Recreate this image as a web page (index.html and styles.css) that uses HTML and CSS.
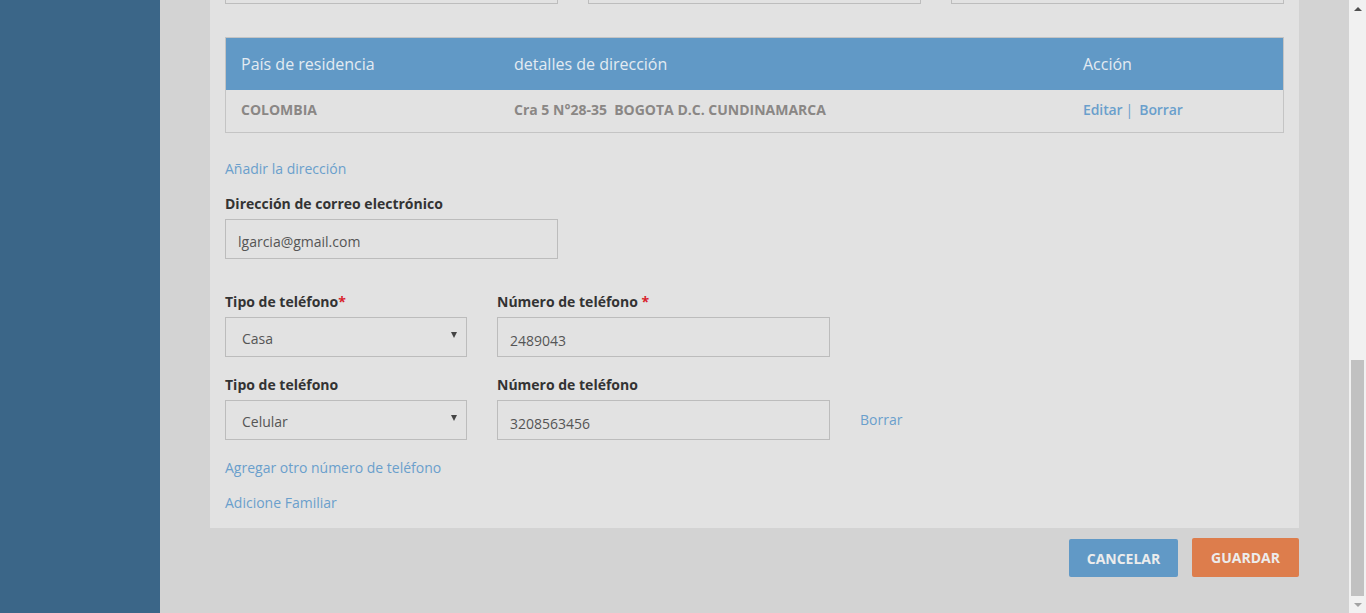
FILE: index.html
```html
<!DOCTYPE html>
<html lang="es">
<head>
<meta charset="utf-8">
<title>Perfil</title>
<link rel="stylesheet" href="styles.css">
</head>
<body>
<div class="app">
  <aside class="sidebar"></aside>
  <main class="main">
    <section class="panel">
      <div class="top-row">
        <div class="field-box"></div>
        <div class="field-box"></div>
        <div class="field-box"></div>
      </div>

      <div class="table">
        <div class="thead">
          <div class="c1">País de residencia</div>
          <div class="c2">detalles de dirección</div>
          <div class="c3">Acción</div>
        </div>
        <div class="trow">
          <div class="c1">COLOMBIA</div>
          <div class="c2">Cra 5 N°28-35&nbsp; BOGOTA D.C. CUNDINAMARCA</div>
          <div class="c3 actions"><a class="link">Editar</a><span class="sep">|</span><a class="link">Borrar</a></div>
        </div>
      </div>

      <a class="link add-address">Añadir la dirección</a>

      <label class="label email-label">Dirección de correo electrónico</label>
      <div class="input email">lgarcia@gmail.com</div>

      <div class="phone-row first">
        <div class="col-type">
          <label class="label">Tipo de teléfono<span class="req">*</span></label>
          <div class="select"><span class="sel-text">Casa</span><span class="arrow"></span></div>
        </div>
        <div class="col-num">
          <label class="label">Número de teléfono <span class="req">*</span></label>
          <div class="input num">2489043</div>
        </div>
      </div>

      <div class="phone-row second">
        <div class="col-type">
          <label class="label">Tipo de teléfono</label>
          <div class="select"><span class="sel-text">Celular</span><span class="arrow"></span></div>
        </div>
        <div class="col-num">
          <label class="label">Número de teléfono</label>
          <div class="input num">3208563456</div>
        </div>
        <a class="link del-phone">Borrar</a>
      </div>

      <a class="link add-phone">Agregar otro número de teléfono</a>
      <a class="link add-family">Adicione Familiar</a>
    </section>

    <div class="buttons">
      <button class="btn cancel">CANCELAR</button>
      <button class="btn save">GUARDAR</button>
    </div>
  </main>
  <div class="scrollbar">
    <div class="sb-up"></div>
    <div class="sb-track"><div class="sb-thumb"></div></div>
    <div class="sb-down"></div>
  </div>
</div>
</body>
</html>
```
FILE: styles.css
```css
* { box-sizing: border-box; }
html, body {
  margin: 0;
  padding: 0;
  height: 613px;
  overflow: hidden;
}
body {
  font-family: "Open Sans", "DejaVu Sans", sans-serif;
  font-size: 14px;
  line-height: 20px;
  color: #333;
}
.app {
  display: flex;
  height: 613px;
}
.sidebar {
  width: 160px;
  flex: none;
  background: #3b6688;
}
.main {
  flex: 1;
  background: #d3d3d3;
  padding: 0 50px;
  display: flex;
  flex-direction: column;
}
.panel {
  background: #e2e2e2;
  padding: 0 15px 15px;
  display: flex;
  flex-direction: column;
  align-items: flex-start;
}
.top-row {
  margin-top: -36px;
  width: 100%;
  display: grid;
  grid-template-columns: 333px 333px 333px;
  justify-content: space-between;
}
.field-box {
  height: 40px;
  border: 1px solid #bdbdbd;
}
.table {
  margin-top: 33px;
  width: 100%;
  border: 1px solid #c4c4c4;
}
.thead, .trow {
  display: flex;
  align-items: center;
}
.thead {
  height: 52px;
  background: #6199c6;
  color: #e3ebf2;
  font-size: 16px;
}
.trow {
  height: 42px;
  padding-bottom: 2px;
  font-weight: 700;
  color: #8a8785;
}
.c1, .c2, .c3 { padding-left: 15px; }
.c1 { width: 273px; }
.c2 { width: 569px; }
.c3 { flex: 1; }
.actions .sep {
  color: #6a9fcc;
  font-weight: 400;
  margin: 0 6px 0 3px;
}
.link {
  color: #6a9fcc;
  text-decoration: none;
  cursor: pointer;
}
.actions .link { font-weight: 600; letter-spacing: -0.1px; }
.add-address { margin-top: 26px; }
.label {
  display: block;
  font-weight: 700;
  color: #333;
}
.req { color: #d9232d; }
.email-label { margin-top: 15px; }
.input, .select {
  height: 40px;
  border: 1px solid #bcbcbc;
  color: #555;
  display: flex;
  align-items: center;
  margin-top: 5px;
}
.email {
  width: 333px;
  padding: 6px 0 0 12px;
}
.num {
  width: 333px;
  padding: 8px 0 0 12px;
}
.select {
  width: 242px;
  padding: 0 9px 0 16px;
  justify-content: space-between;
}
.sel-text { padding-top: 4px; }
.arrow {
  width: 0;
  height: 0;
  border-left: 3px solid transparent;
  border-right: 3px solid transparent;
  border-top: 6px solid #444;
  margin-top: -4px;
}
.phone-row {
  display: flex;
  align-items: flex-end;
  column-gap: 30px;
}
.phone-row.first { margin-top: 33px; }
.phone-row.second { margin-top: 18px; }
.del-phone {
  align-self: flex-end;
  margin-bottom: 10px;
}
.add-phone { margin-top: 18px; }
.add-family { margin-top: 15px; }
.buttons {
  display: flex;
  justify-content: flex-end;
  align-items: flex-end;
  gap: 14px;
  margin-top: 10px;
}
.btn {
  font-family: "Open Sans", "DejaVu Sans", sans-serif;
  font-size: 14px;
  font-weight: 700;
  color: #ececec;
  border: 0;
  border-radius: 2px;
  height: 38px;
  padding: 0;
}
.cancel { width: 109px; background: #6199c6; }
.save { width: 107px; height: 39px; background: #dd7d4c; }
.scrollbar {
  width: 17px;
  flex: none;
  background: #f1f1f1;
  display: flex;
  flex-direction: column;
}
.sb-up, .sb-down {
  height: 17px;
  display: flex;
  align-items: center;
  justify-content: center;
}
.sb-up::before {
  content: "";
  border-left: 4px solid transparent;
  border-right: 4px solid transparent;
  border-bottom: 4px solid #505050;
}
.sb-down::before {
  content: "";
  border-left: 4px solid transparent;
  border-right: 4px solid transparent;
  border-top: 4px solid #a3a3a3;
}
.sb-track {
  flex: 1;
  display: flex;
  flex-direction: column;
  justify-content: flex-end;
  padding: 0 2px;
}
.sb-thumb {
  height: 236px;
  background: #c1c1c1;
}
```
